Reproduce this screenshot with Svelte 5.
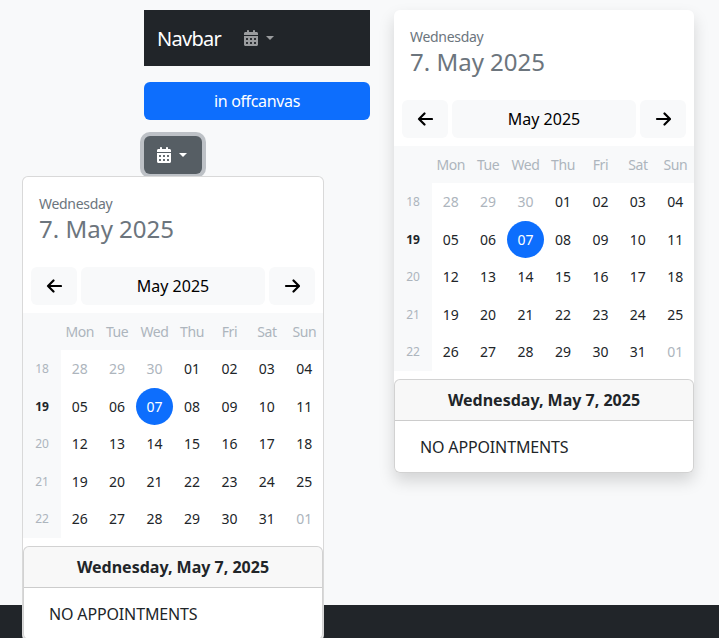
<script>
  const weekdays = ['Mon', 'Tue', 'Wed', 'Thu', 'Fri', 'Sat', 'Sun'];

  // week number plus its days, muted = other month
  const weeks = [
    { nr: 18, days: [['28', 1], ['29', 1], ['30', 1], ['01'], ['02'], ['03'], ['04']] },
    { nr: 19, current: true, days: [['05'], ['06'], ['07'], ['08'], ['09'], ['10'], ['11']] },
    { nr: 20, days: [['12'], ['13'], ['14'], ['15'], ['16'], ['17'], ['18']] },
    { nr: 21, days: [['19'], ['20'], ['21'], ['22'], ['23'], ['24'], ['25']] },
    { nr: 22, days: [['26'], ['27'], ['28'], ['29'], ['30'], ['31'], ['01', 1]] }
  ];

  const calendarPath = 'M128 0c17.7 0 32 14.3 32 32V64H288V32c0-17.7 14.3-32 32-32s32 14.3 32 32V64h48c26.5 0 48 21.5 48 48v48H0V112C0 85.5 21.5 64 48 64H96V32c0-17.7 14.3-32 32-32zM0 192H448V464c0 26.5-21.5 48-48 48H48c-26.5 0-48-21.5-48-48V192zm64 80v32c0 8.8 7.2 16 16 16h32c8.8 0 16-7.2 16-16V272c0-8.8-7.2-16-16-16H80c-8.8 0-16 7.2-16 16zm128 0v32c0 8.8 7.2 16 16 16h32c8.8 0 16-7.2 16-16V272c0-8.8-7.2-16-16-16H208c-8.8 0-16 7.2-16 16zm144-16c-8.8 0-16 7.2-16 16v32c0 8.8 7.2 16 16 16h32c8.8 0 16-7.2 16-16V272c0-8.8-7.2-16-16-16H336zM64 400v32c0 8.8 7.2 16 16 16h32c8.8 0 16-7.2 16-16V400c0-8.8-7.2-16-16-16H80c-8.8 0-16 7.2-16 16zm144-16c-8.8 0-16 7.2-16 16v32c0 8.8 7.2 16 16 16h32c8.8 0 16-7.2 16-16V400c0-8.8-7.2-16-16-16H208zm112 16v32c0 8.8 7.2 16 16 16h32c8.8 0 16-7.2 16-16V400c0-8.8-7.2-16-16-16H336c-8.8 0-16 7.2-16 16z';
</script>

{#snippet calIcon()}
  <svg class="cal-icon" viewBox="0 0 448 512" fill="currentColor"><path d={calendarPath} /></svg>
{/snippet}

{#snippet calendar()}
  <div class="head">
    <div class="head-day">Wednesday</div>
    <div class="head-date">7. May 2025</div>
  </div>
  <div class="nav">
    <button class="nav-btn" aria-label="Previous">
      <svg viewBox="0 0 16 16" fill="none" stroke="#000" stroke-width="2.2" stroke-linecap="round" stroke-linejoin="round"><path d="M15 8H2M7.5 2.5 2 8l5.5 5.5" /></svg>
    </button>
    <button class="nav-title">May 2025</button>
    <button class="nav-btn" aria-label="Next">
      <svg viewBox="0 0 16 16" fill="none" stroke="#000" stroke-width="2.2" stroke-linecap="round" stroke-linejoin="round"><path d="M2 8h13M9.5 2.5 15 8l-5.5 5.5" /></svg>
    </button>
  </div>
  <div class="grid">
    <div class="wd-row">
      <span class="wk"></span>
      {#each weekdays as d}
        <span class="wd">{d}</span>
      {/each}
    </div>
    {#each weeks as w}
      <div class="row">
        <span class="wk" class:wk-now={w.current}>{w.nr}</span>
        {#each w.days as [label, muted]}
          <span class="day" class:muted class:active={w.current && label === '07'}>{label}</span>
        {/each}
      </div>
    {/each}
  </div>
  <div class="card">
    <div class="card-head">Wednesday, May 7, 2025</div>
    <div class="card-body">NO APPOINTMENTS</div>
  </div>
{/snippet}

<div class="page">
  <div class="main">
    <div class="left">
      <nav class="navbar">
        <span class="brand">Navbar</span>
        <span class="nav-drop">
          {@render calIcon()}
          <i class="caret"></i>
        </span>
      </nav>
      <button class="offcanvas">in offcanvas</button>
      <div class="drop-wrap">
        <button class="drop-btn">
          {@render calIcon()}
          <i class="caret"></i>
        </button>
        <div class="drop-menu">
          {@render calendar()}
        </div>
      </div>
    </div>
    <div class="inline-cal">
      {@render calendar()}
    </div>
  </div>
  <footer class="footer"></footer>
</div>

<style>
  :global(body) {
    background: #f8f9fa;
    font-family: "Noto Sans", "Open Sans", sans-serif;
    color: #212529;
  }

  button {
    font: inherit;
    border: 0;
    cursor: pointer;
  }

  .page {
    height: 638px;
    overflow: hidden;
    display: flex;
    flex-direction: column;
  }

  .main {
    flex: 1;
    display: flex;
    align-items: flex-start;
    gap: 24px;
    padding: 10px 0 0 144px;
  }

  .left {
    width: 226px;
    display: flex;
    flex-direction: column;
  }

  /* navbar */
  .navbar {
    height: 56px;
    background: #212529;
    display: flex;
    align-items: center;
    padding-left: 13px;
  }

  .brand {
    color: #fff;
    font-size: 20px;
    letter-spacing: -0.7px;
  }

  .nav-drop {
    display: flex;
    align-items: center;
    margin-left: 23px;
    color: rgba(255, 255, 255, 0.55);
  }

  .cal-icon {
    width: 14px;
    height: 16px;
    display: block;
  }

  .caret {
    display: block;
    margin-left: 8px;
    border-top: 4.8px solid currentColor;
    border-left: 4.8px solid transparent;
    border-right: 4.8px solid transparent;
  }

  .offcanvas {
    margin-top: 16px;
    height: 38px;
    background: #0d6efd;
    color: #fff;
    border-radius: 6px;
    font-size: 16px;
    letter-spacing: -0.35px;
  }

  .drop-wrap {
    position: relative;
    margin-top: 16px;
  }

  .drop-btn {
    display: flex;
    align-items: center;
    width: 58px;
    height: 38px;
    padding-left: 13px;
    background: #565e64;
    color: #fff;
    border-radius: 6px;
    box-shadow: 0 0 0 4px rgba(130, 138, 145, 0.5);
  }

  .drop-menu {
    position: absolute;
    top: 40px;
    left: -122px;
    width: 300px;
    background: #fff;
    border: 1px solid rgba(0, 0, 0, 0.15);
    border-radius: 6px;
  }

  .inline-cal {
    width: 300px;
    background: #fff;
    border-radius: 6px;
    box-shadow: 0 8px 16px rgba(0, 0, 0, 0.15);
  }

  /* calendar */
  .head {
    padding: 16px 16px 0;
    color: #6c757d;
    height: 90px;
    box-sizing: border-box;
  }

  .head-day {
    font-size: 14px;
    line-height: 21px;
    letter-spacing: -0.3px;
  }

  .head-date {
    font-size: 24px;
    line-height: 30px;
  }

  .nav {
    display: flex;
    gap: 4px;
    padding: 0 8px;
    height: 38px;
  }

  .nav-btn {
    width: 46px;
    background: #f8f9fa;
    border-radius: 6px;
    display: flex;
    align-items: center;
    justify-content: center;
    padding: 0;
  }

  .nav-btn svg {
    width: 16px;
    height: 16px;
  }

  .nav-title {
    flex: 1;
    background: #f8f9fa;
    border-radius: 6px;
    color: #000;
    font-size: 16px;
  }

  .grid {
    margin-top: 8px;
  }

  .wd-row,
  .row {
    display: grid;
    grid-template-columns: 38px repeat(7, 1fr);
    align-items: stretch;
    text-align: center;
  }

  .wd-row {
    height: 37px;
    background: #f8f9fa;
    line-height: 37px;
    font-size: 14px;
    letter-spacing: -0.4px;
    color: #adb5bd;
  }

  .row {
    height: 37.6px;
    font-size: 14px;
    line-height: 37.6px;
    color: #212529;
  }

  .wk {
    background: #f8f9fa;
    color: #adb5bd;
    font-size: 12px;
  }

  .wk-now {
    color: #212529;
    font-weight: 700;
  }

  .day.muted {
    color: #adb5bd;
  }

  .day.active {
    width: 37px;
    height: 37px;
    justify-self: center;
    border-radius: 50%;
    background: #0d6efd;
    color: #fff;
  }

  /* appointments card */
  .card {
    margin-top: 8px;
    background: #fff;
    border: 1px solid rgba(0, 0, 0, 0.175);
    border-radius: 6px;
    overflow: hidden;
  }

  .card-head {
    height: 41px;
    box-sizing: border-box;
    background: rgba(33, 37, 41, 0.03);
    border-bottom: 1px solid rgba(0, 0, 0, 0.175);
    text-align: center;
    font-weight: 700;
    font-size: 16px;
    line-height: 40px;
  }

  .card-body {
    padding: 16px 25px 15px;
    font-size: 16px;
    line-height: 20px;
    letter-spacing: -0.15px;
  }

  .footer {
    height: 33px;
    flex: none;
    background: #212529;
  }
</style>
